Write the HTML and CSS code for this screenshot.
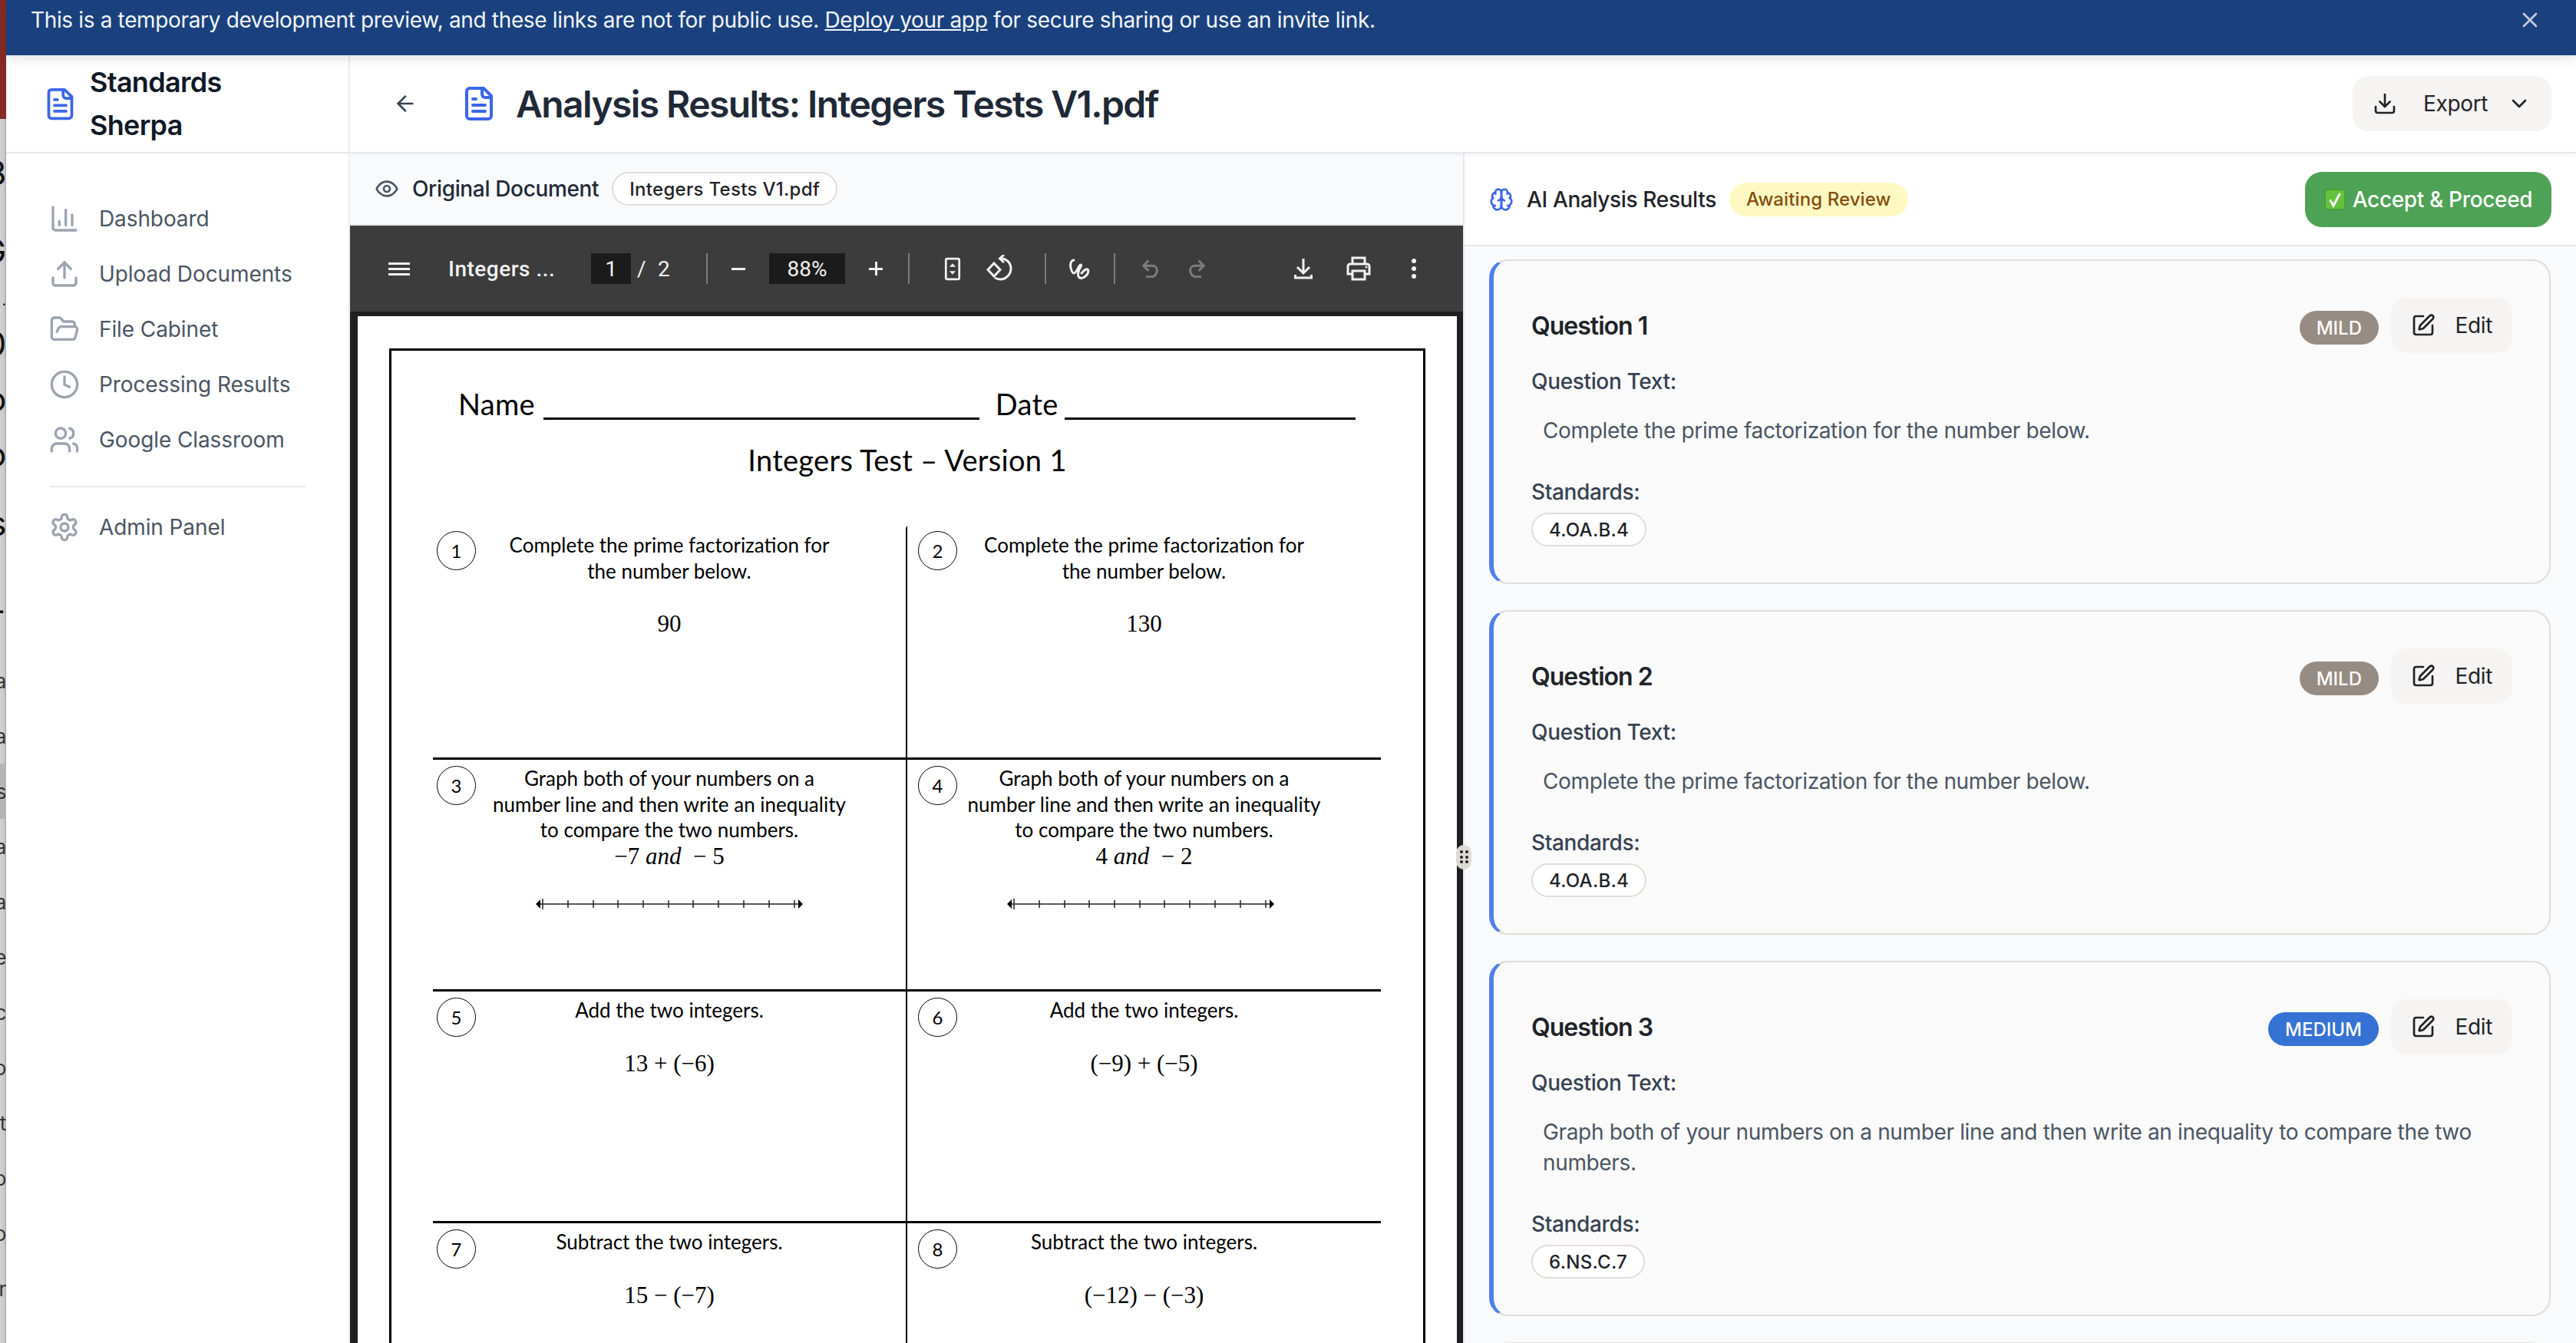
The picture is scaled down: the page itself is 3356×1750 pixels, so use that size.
FILE: index.html
```html
<!DOCTYPE html>
<html lang="en">

<head>
  <meta charset="UTF-8">
  <meta name="viewport" content="width=device-width, initial-scale=1.0">
  <title>Analysis Results</title>
  <link rel="stylesheet" href="styles.css">
</head>

<body>
  <!-- the window behind, only a sliver of it shows -->
  <div class="behind">
    <div class="behind-top"></div>
    <div class="behind-text">
      <p class="h116">8</p>
      <p class="h87">G</p>
      <p class="h42 tiny">.</p>
      <p class="h72">0</p>
      <p class="h72">o</p>
      <p class="h72">o</p>
      <p class="h108">s</p>
      <p class="h115">+</p>
      <p class="h72 small">a</p>
      <p class="h72 small">a</p>
      <p class="h72 small shade">s</p>
      <p class="h72 small">a</p>
      <p class="h72 small">a</p>
      <p class="h72 small">e</p>
      <p class="h72 small">c</p>
      <p class="h72 small">o</p>
      <p class="h72 small">t</p>
      <p class="h72 small">o</p>
      <p class="h72 small">o</p>
      <p class="h72 small">r</p>
    </div>
  </div>

  <div class="app">
    <div class="banner">
      <span>This is a temporary development preview, and these links are not for public use. <a href="#">Deploy your app</a> for secure sharing or use an invite link.</span>
      <svg class="ic ic-close" viewBox="0 0 24 24"><path d="M18 6 6 18" /><path d="m6 6 12 12" /></svg>
    </div>

    <div class="workspace">
      <aside class="sidebar">
        <div class="side-head">
          <svg class="ic ic-logo" viewBox="0 0 24 24"><path d="M15 2H6a2 2 0 0 0-2 2v16a2 2 0 0 0 2 2h12a2 2 0 0 0 2-2V7Z" /><path d="M14 2v4a2 2 0 0 0 2 2h4" /><path d="M10 9H8" /><path d="M16 13H8" /><path d="M16 17H8" /></svg>
          <div class="brand">Standards Sherpa</div>
        </div>
        <nav class="nav">
          <a class="nav-item" href="#">
            <svg class="ic" viewBox="0 0 24 24"><path d="M3 3v16a2 2 0 0 0 2 2h16" /><path d="M18 17V9" /><path d="M13 17V5" /><path d="M8 17v-3" /></svg>
            Dashboard
          </a>
          <a class="nav-item" href="#">
            <svg class="ic" viewBox="0 0 24 24"><path d="M21 15v4a2 2 0 0 1-2 2H5a2 2 0 0 1-2-2v-4" /><path d="M17 8 12 3 7 8" /><path d="M12 3v12" /></svg>
            Upload Documents
          </a>
          <a class="nav-item" href="#">
            <svg class="ic" viewBox="0 0 24 24"><path d="m6 14 1.5-2.9A2 2 0 0 1 9.24 10H20a2 2 0 0 1 1.94 2.5l-1.54 6a2 2 0 0 1-1.95 1.5H4a2 2 0 0 1-2-2V5a2 2 0 0 1 2-2h3.9a2 2 0 0 1 1.69.9l.81 1.2a2 2 0 0 0 1.67.9H18a2 2 0 0 1 2 2v2" /></svg>
            File Cabinet
          </a>
          <a class="nav-item" href="#">
            <svg class="ic" viewBox="0 0 24 24"><circle cx="12" cy="12" r="10" /><path d="M12 6v6l4 2" /></svg>
            Processing Results
          </a>
          <a class="nav-item" href="#">
            <svg class="ic" viewBox="0 0 24 24"><path d="M16 21v-2a4 4 0 0 0-4-4H6a4 4 0 0 0-4 4v2" /><circle cx="9" cy="7" r="4" /><path d="M22 21v-2a4 4 0 0 0-3-3.87" /><path d="M16 3.13a4 4 0 0 1 0 7.75" /></svg>
            Google Classroom
          </a>
          <div class="nav-line"></div>
          <a class="nav-item" href="#">
            <svg class="ic" viewBox="0 0 24 24"><path d="M12.22 2h-.44a2 2 0 0 0-2 2v.18a2 2 0 0 1-1 1.73l-.43.25a2 2 0 0 1-2 0l-.15-.08a2 2 0 0 0-2.73.73l-.22.38a2 2 0 0 0 .73 2.73l.15.1a2 2 0 0 1 1 1.72v.51a2 2 0 0 1-1 1.74l-.15.09a2 2 0 0 0-.73 2.73l.22.38a2 2 0 0 0 2.73.73l.15-.08a2 2 0 0 1 2 0l.43.25a2 2 0 0 1 1 1.73V20a2 2 0 0 0 2 2h.44a2 2 0 0 0 2-2v-.18a2 2 0 0 1 1-1.73l.43-.25a2 2 0 0 1 2 0l.15.08a2 2 0 0 0 2.73-.73l.22-.39a2 2 0 0 0-.73-2.73l-.15-.08a2 2 0 0 1-1-1.74v-.5a2 2 0 0 1 1-1.74l.15-.09a2 2 0 0 0 .73-2.73l-.22-.38a2 2 0 0 0-2.73-.73l-.15.08a2 2 0 0 1-2 0l-.43-.25a2 2 0 0 1-1-1.73V4a2 2 0 0 0-2-2z" /><circle cx="12" cy="12" r="3" /></svg>
            Admin Panel
          </a>
        </nav>
      </aside>

      <main class="main">
        <header class="main-head">
          <svg class="ic ic-back" viewBox="0 0 24 24"><path d="m12 19-7-7 7-7" /><path d="M19 12H5" /></svg>
          <svg class="ic ic-title" viewBox="0 0 24 24"><path d="M15 2H6a2 2 0 0 0-2 2v16a2 2 0 0 0 2 2h12a2 2 0 0 0 2-2V7Z" /><path d="M14 2v4a2 2 0 0 0 2 2h4" /><path d="M10 9H8" /><path d="M16 13H8" /><path d="M16 17H8" /></svg>
          <h1 class="title">Analysis Results: Integers Tests V1.pdf</h1>
          <button class="export">
            <svg class="ic ic-dark" viewBox="0 0 24 24"><path d="M21 15v4a2 2 0 0 1-2 2H5a2 2 0 0 1-2-2v-4" /><path d="m7 10 5 5 5-5" /><path d="M12 15V3" /></svg>
            <span class="export-label">Export</span>
            <svg class="ic ic-dark" viewBox="0 0 24 24"><path d="m6 9 6 6 6-6" /></svg>
          </button>
        </header>

        <div class="panels">
          <section class="left-panel">
            <div class="doc-bar">
              <svg class="ic ic-eye" viewBox="0 0 24 24"><path d="M2 12s3-7 10-7 10 7 10 7-3 7-10 7-10-7-10-7Z" /><circle cx="12" cy="12" r="3" /></svg>
              <span class="doc-label">Original Document</span>
              <span class="chip">Integers Tests V1.pdf</span>
            </div>

            <div class="pdf-bar">
              <div class="pdf-left">
                <svg class="tb-ic tb-menu" viewBox="0 0 28 24"><path d="M0 4h28v3H0zM0 11h28v3H0zM0 18h28v3H0z" /></svg>
                <span class="pdf-name">Integers ...</span>
              </div>
              <div class="pdf-mid">
                <span class="pdf-input page-num">1</span>
                <span class="pdf-slash">/</span>
                <span class="pdf-total">2</span>
                <span class="pdf-sep first"></span>
                <span class="pdf-minus"></span>
                <span class="pdf-input zoom-num">88%</span>
                <span class="pdf-plus"></span>
                <span class="pdf-sep"></span>
                <svg class="tb-ic tb-fit" viewBox="0 0 24 32"><rect x="2.500" y="1.500" width="19" height="29" rx="2" fill="none" stroke="currentColor" stroke-width="3" /><path d="M12 8l4.500 5h-9zM12 24l-4.500-5h9z" /></svg>
                <svg class="tb-ic tb-rotate" viewBox="0 0 36 36"><path d="M10 11 18 19.500 10 28 2 19.500Z" fill="none" stroke="currentColor" stroke-width="3" /><path d="M19 5c8 0 13 6 13 13s-6 14-14 14c-3 0-5-1-7-2" fill="none" stroke="currentColor" stroke-width="3" /><path d="M23 0 17.500 5l5.500 5" fill="none" stroke="currentColor" stroke-width="3" /></svg>
                <span class="pdf-sep"></span>
                <svg class="tb-ic tb-draw" viewBox="0 0 28 27"><path d="M6 2C2 2 1 8 2 12c1 4 2 7 4 7 4 0 6-11 9-11 3 0-6 9-3 15 2 4 7 3 11-2 3-4 2-8-1-7-3 1-5 4-6 5" fill="none" stroke="currentColor" stroke-width="3" stroke-linecap="round" /></svg>
                <span class="pdf-sep"></span>
                <svg class="tb-ic tb-undo" viewBox="0 0 28 32"><path d="M11 3 3 11l8 8M3 11h13c5 0 8 3 8 7s-3 10-8 10H7" fill="none" stroke="currentColor" stroke-width="3.500" /></svg>
                <svg class="tb-ic tb-redo" viewBox="0 0 28 32"><path d="M17 3l8 8-8 8M25 11H12c-5 0-8 3-8 7s3 10 8 10h9" fill="none" stroke="currentColor" stroke-width="3.500" /></svg>
              </div>
              <div class="pdf-right">
                <svg class="tb-ic tb-dl" viewBox="0 0 24 28"><path d="M12 1v18M4 12l8 8 8-8" fill="none" stroke="currentColor" stroke-width="3" /><path d="M1.500 22v4h21v-4" fill="none" stroke="currentColor" stroke-width="3" /></svg>
                <svg class="tb-ic tb-print" viewBox="0 0 32 32"><path d="M8 10V2h16v8M8 23H2V13a3 3 0 0 1 3-3h22a3 3 0 0 1 3 3v10h-6M8 19h16v11H8z" fill="none" stroke="currentColor" stroke-width="3" /><circle cx="26" cy="14" r="1.500" /></svg>
                <svg class="tb-ic tb-more" viewBox="0 0 8 28"><circle cx="4" cy="4" r="3" /><circle cx="4" cy="14" r="3" /><circle cx="4" cy="24" r="3" /></svg>
              </div>
            </div>

            <div class="viewer">
              <div class="page">
                <div class="sheet">
                  <div class="ws-head">
                    <span>Name</span><span class="blank blank-name"></span>
                    <span class="ws-date">Date</span><span class="blank blank-date"></span>
                  </div>
                  <div class="ws-title">Integers Test – Version 1</div>
                  <div class="ws-grid">
                    <div class="ws-cell top left">
                      <span class="num">1</span>
                      <p>Complete the prime factorization for<br>the number below.</p>
                      <p class="math">90</p>
                    </div>
                    <div class="ws-cell top">
                      <span class="num">2</span>
                      <p>Complete the prime factorization for<br>the number below.</p>
                      <p class="math">130</p>
                    </div>
                    <div class="ws-cell left">
                      <span class="num">3</span>
                      <p>Graph both of your numbers on a<br>number line and then write an inequality<br>to compare the two numbers.</p>
                      <p class="math tight">−7 <i>and</i> &nbsp;− 5</p>
                      <svg class="numline" viewBox="0 0 348 18"><path d="M2 9h344M9 2v14M42 4v10M75 4v10M107 4v10M140 4v10M173 4v10M205 4v10M238 4v10M271 4v10M304 4v10M337 4v10" /><path class="head" d="M0 9l6-6v12zM348 9l-6-6v12z" /></svg>
                    </div>
                    <div class="ws-cell">
                      <span class="num">4</span>
                      <p>Graph both of your numbers on a<br>number line and then write an inequality<br>to compare the two numbers.</p>
                      <p class="math tight">4 <i>and</i> &nbsp;− 2</p>
                      <svg class="numline" viewBox="0 0 348 18"><path d="M2 9h344M9 2v14M42 4v10M75 4v10M107 4v10M140 4v10M173 4v10M205 4v10M238 4v10M271 4v10M304 4v10M337 4v10" /><path class="head" d="M0 9l6-6v12zM348 9l-6-6v12z" /></svg>
                    </div>
                    <div class="ws-cell left">
                      <span class="num">5</span>
                      <p>Add the two integers.</p>
                      <p class="math">13 + (−6)</p>
                    </div>
                    <div class="ws-cell">
                      <span class="num">6</span>
                      <p>Add the two integers.</p>
                      <p class="math">(−9) + (−5)</p>
                    </div>
                    <div class="ws-cell left">
                      <span class="num">7</span>
                      <p>Subtract the two integers.</p>
                      <p class="math">15 − (−7)</p>
                    </div>
                    <div class="ws-cell">
                      <span class="num">8</span>
                      <p>Subtract the two integers.</p>
                      <p class="math">(−12) − (−3)</p>
                    </div>
                  </div>
                </div>
              </div>
            </div>
          </section>

          <div class="handle"><i></i><i></i><i></i><i></i><i></i><i></i></div>

          <section class="right-panel">
            <div class="ai-head">
              <svg class="ic ic-brain" viewBox="0 0 24 24"><path d="M12 5a3 3 0 1 0-5.997.125 4 4 0 0 0-2.526 5.77 4 4 0 0 0 .556 6.588A4 4 0 1 0 12 18Z" /><path d="M12 5a3 3 0 1 1 5.997.125 4 4 0 0 1 2.526 5.77 4 4 0 0 1-.556 6.588A4 4 0 1 1 12 18Z" /><path d="M15 13a4.500 4.500 0 0 1-3-4 4.500 4.500 0 0 1-3 4" /><path d="M17.599 6.500a3 3 0 0 0 .399-1.375" /><path d="M6.003 5.125A3 3 0 0 0 6.401 6.500" /><path d="M3.477 10.896a4 4 0 0 1 .585-.396" /><path d="M19.938 10.500a4 4 0 0 1 .585.396" /><path d="M6 18a4 4 0 0 1-1.967-.516" /><path d="M19.967 17.484A4 4 0 0 1 18 18" /></svg>
              <span class="ai-label">AI Analysis Results</span>
              <span class="await">Awaiting Review</span>
              <button class="accept">
                <svg class="check" viewBox="0 0 28 28"><rect x="1" y="1" width="26" height="26" rx="4" fill="#62c23c" stroke="#3f8f2c" /><path d="M7.500 14.500l4.500 7.500 8.500-16" fill="none" stroke="#fff" stroke-width="3" /></svg>
                Accept &amp; Proceed
              </button>
            </div>

            <div class="cards">
              <article class="card">
                <div class="card-head">
                  <h3>Question 1</h3>
                  <span class="level mild">MILD</span>
                  <button class="edit"><svg class="ic ic-dark" viewBox="0 0 24 24"><path d="M12 3H5a2 2 0 0 0-2 2v14a2 2 0 0 0 2 2h14a2 2 0 0 0 2-2v-7" /><path d="M18.375 2.625a1 1 0 0 1 3 3l-9.013 9.014a2 2 0 0 1-.853.505l-2.873.84a.5.5 0 0 1-.62-.62l.84-2.873a2 2 0 0 1 .506-.852z" /></svg>Edit</button>
                </div>
                <div class="field">Question Text:</div>
                <p class="q-text">Complete the prime factorization for the number below.</p>
                <div class="field std">Standards:</div>
                <span class="chip std-chip">4.OA.B.4</span>
              </article>

              <article class="card">
                <div class="card-head">
                  <h3>Question 2</h3>
                  <span class="level mild">MILD</span>
                  <button class="edit"><svg class="ic ic-dark" viewBox="0 0 24 24"><path d="M12 3H5a2 2 0 0 0-2 2v14a2 2 0 0 0 2 2h14a2 2 0 0 0 2-2v-7" /><path d="M18.375 2.625a1 1 0 0 1 3 3l-9.013 9.014a2 2 0 0 1-.853.505l-2.873.84a.5.5 0 0 1-.62-.62l.84-2.873a2 2 0 0 1 .506-.852z" /></svg>Edit</button>
                </div>
                <div class="field">Question Text:</div>
                <p class="q-text">Complete the prime factorization for the number below.</p>
                <div class="field std">Standards:</div>
                <span class="chip std-chip">4.OA.B.4</span>
              </article>

              <article class="card">
                <div class="card-head">
                  <h3>Question 3</h3>
                  <span class="level medium">MEDIUM</span>
                  <button class="edit"><svg class="ic ic-dark" viewBox="0 0 24 24"><path d="M12 3H5a2 2 0 0 0-2 2v14a2 2 0 0 0 2 2h14a2 2 0 0 0 2-2v-7" /><path d="M18.375 2.625a1 1 0 0 1 3 3l-9.013 9.014a2 2 0 0 1-.853.505l-2.873.84a.5.5 0 0 1-.62-.62l.84-2.873a2 2 0 0 1 .506-.852z" /></svg>Edit</button>
                </div>
                <div class="field">Question Text:</div>
                <p class="q-text">Graph both of your numbers on a number line and then write an inequality to compare the two numbers.</p>
                <div class="field std">Standards:</div>
                <span class="chip std-chip">6.NS.C.7</span>
              </article>

              <article class="card"></article>
            </div>
          </section>
        </div>
      </main>
    </div>
  </div>
</body>

</html>
```

FILE: styles.css
```css
* {
  box-sizing: border-box;
}

html,
body {
  margin: 0;
  height: 100%;
  overflow: hidden;
}

body {
  display: flex;
  font-family: Inter, "Liberation Sans", sans-serif;
  font-size: 28px;
  letter-spacing: -0.35px;
  color: #1f2937;
  background: #fff;
}

p,
h1,
h3 {
  margin: 0;
}

button {
  font: inherit;
  letter-spacing: inherit;
  border: 0;
  color: #1f2328;
}

/* icons */
.ic {
  flex: none;
  width: 40px;
  height: 40px;
  fill: none;
  stroke: #9ca3af;
  stroke-width: 2;
  stroke-linecap: round;
  stroke-linejoin: round;
}

.ic-dark {
  width: 32px;
  height: 32px;
  stroke: #1f2328;
}

.ic-logo,
.ic-title {
  stroke: #3b66e8;
}

.ic-logo {
  width: 45px;
  height: 45px;
}

.ic-title {
  width: 48px;
  height: 48px;
}

.ic-back {
  width: 32px;
  height: 32px;
  stroke: #374151;
}

.ic-eye {
  width: 32px;
  height: 32px;
  stroke: #4b5563;
}

.ic-brain {
  width: 32px;
  height: 32px;
  stroke: #3b66e8;
}

.ic-close {
  width: 32px;
  height: 32px;
  stroke: #c3cce0;
}

/* window behind */
.behind {
  flex: none;
  width: 8px;
  height: 100%;
  overflow: hidden;
  background: linear-gradient(to right, #d2d2d2, #c9c9c9 70%, #a5a5a5);
}

.behind-top {
  height: 155px;
  background: #862a24;
}

.behind-text {
  padding-top: 12px;
  font-size: 44px;
  color: #111;
}

.behind-text p {
  display: flex;
  justify-content: flex-end;
  align-items: center;
}

.behind-text .small {
  font-size: 26px;
  color: #333;
}

.behind-text .tiny {
  font-size: 20px;
}

.behind-text .shade {
  background: #b5b5b5;
}

.h42 { height: 42px; }
.h72 { height: 72px; }
.h87 { height: 87px; }
.h108 { height: 108px; }
.h115 { height: 115px; }
.h116 { height: 116px; }

/* app */
.app {
  flex: 1;
  min-width: 0;
  display: flex;
  flex-direction: column;
}

.banner {
  flex: none;
  height: 72px;
  padding: 0 44px 20px 32px;
  display: flex;
  align-items: center;
  justify-content: space-between;
  background: #1a417e;
  color: #f3f5fa;
  position: relative;
  z-index: 2;
  box-shadow: 0 4px 14px rgba(0, 0, 0, .12);
}

.banner a {
  color: inherit;
}

.workspace {
  flex: 1;
  min-height: 0;
  display: flex;
}

/* sidebar */
.sidebar {
  flex: none;
  width: 448px;
  border-right: 2px solid #eceef1;
}

.side-head {
  height: 128px;
  padding-left: 48px;
  display: flex;
  align-items: center;
  gap: 16px;
  border-bottom: 2px solid #e5e7eb;
}

.brand {
  width: 200px;
  font-size: 36px;
  font-weight: 600;
  line-height: 56px;
  letter-spacing: -0.7px;
  color: #111827;
}

.nav {
  padding: 49px 55px 0 56px;
}

.nav-item {
  height: 72px;
  display: flex;
  align-items: center;
  gap: 25px;
  color: #4b5563;
  text-decoration: none;
  letter-spacing: -0.1px;
}

.nav-line {
  height: 2px;
  margin: 24px 0 16px;
  background: #e5e7eb;
}

/* main */
.main {
  flex: 1;
  min-width: 0;
  display: flex;
  flex-direction: column;
}

.main-head {
  flex: none;
  height: 128px;
  padding: 0 32px 0 56px;
  display: flex;
  align-items: center;
  border-bottom: 2px solid #e5e7eb;
  box-shadow: 0 2px 4px rgba(0, 0, 0, .04);
  position: relative;
  z-index: 1;
}

.ic-back {
  margin-right: 56px;
}

.title {
  flex: 1;
  margin-left: 24px;
  font-size: 48px;
  font-weight: 600;
  letter-spacing: -1.6px;
  color: #1f2937;
}

.export {
  width: 259px;
  height: 72px;
  padding: 0 26px;
  display: flex;
  align-items: center;
  border-radius: 20px;
  background: #f5f4f2;
}

.export-label {
  margin: 0 25px 0 34px;
}

.panels {
  flex: 1;
  min-height: 0;
  display: flex;
  position: relative;
}

.left-panel {
  flex: none;
  width: 1450px;
  display: flex;
  flex-direction: column;
}

.doc-bar {
  flex: none;
  height: 94px;
  padding-left: 32px;
  display: flex;
  align-items: center;
  gap: 17px;
  background: #f8fafc;
  border-bottom: 2px solid #e5e7eb;
}

.doc-label {
  font-weight: 500;
  color: #1f2937;
}

.chip {
  height: 44px;
  padding: 0 21px;
  display: inline-flex;
  align-items: center;
  border: 2px solid #e0ddd8;
  border-radius: 22px;
  background: #fff;
  font-size: 24px;
  font-weight: 500;
  letter-spacing: 0.3px;
  color: #1f2328;
}

/* pdf toolbar */
.pdf-bar {
  flex: none;
  height: 112px;
  padding: 0 32px;
  display: flex;
  align-items: center;
  background: #3c3c3c;
  color: #f1f1f1;
  font-family: Roboto, sans-serif;
  letter-spacing: 0;
}

.tb-ic {
  flex: none;
  fill: currentColor;
}

.pdf-left {
  width: 282px;
  display: flex;
  align-items: center;
}

.tb-menu {
  width: 28px;
  height: 24px;
  margin: 0 50px 0 18px;
}

.pdf-name {
  font-size: 28px;
  font-weight: 500;
  letter-spacing: 0.5px;
}

.pdf-mid {
  flex: 1;
  display: flex;
  align-items: center;
}

.pdf-input {
  height: 40px;
  display: flex;
  align-items: center;
  justify-content: center;
  background: #1b1b1b;
  font-size: 28px;
}

.page-num {
  width: 52px;
}

.zoom-num {
  width: 99px;
}

.pdf-slash {
  margin-left: 8px;
  width: 12px;
}

.pdf-total {
  margin-left: 15px;
  width: 20px;
}

.pdf-sep {
  flex: none;
  width: 2px;
  height: 40px;
  margin: 0 20px;
  background: #7c7c7c;
}

.pdf-sep.first {
  margin-left: 43px;
  margin-right: 31px;
}

.pdf-minus,
.pdf-plus {
  flex: none;
  width: 18px;
  height: 3px;
  background: currentColor;
}

.pdf-minus {
  margin-right: 31px;
}

.pdf-plus {
  margin: 0 13px 0 31px;
  position: relative;
}

.pdf-plus::after {
  content: "";
  position: absolute;
  left: 7.500px;
  top: -7.500px;
  width: 3px;
  height: 18px;
  background: currentColor;
}

.tb-fit {
  width: 22px;
  height: 31px;
  margin-left: 25px;
}

.tb-rotate {
  width: 36px;
  height: 36px;
  margin: 0 20px 0 33px;
}

.tb-draw {
  width: 28px;
  height: 27px;
  margin: 0 10px;
}

.tb-undo,
.tb-redo {
  width: 24px;
  height: 27px;
  color: #7d7d7d;
}

.tb-undo {
  margin-left: 14px;
}

.tb-redo {
  margin-left: 36px;
}

.pdf-right {
  display: flex;
  align-items: center;
}

.tb-dl {
  width: 24px;
  height: 28px;
  margin-right: 44px;
}

.tb-print {
  width: 32px;
  height: 32px;
  margin-right: 52px;
}

.tb-more {
  width: 8px;
  height: 28px;
  margin-right: 28px;
}

/* pdf page */
.viewer {
  flex: 1;
  min-height: 0;
  padding: 6px 8px 0 10px;
  background: #1f1f1f;
  overflow: hidden;
}

.page {
  height: 100%;
  padding: 42px 41px 0 41px;
  background: #fff;
  overflow: hidden;
  font-family: Lato, sans-serif;
  letter-spacing: 0;
  color: #000;
}

.sheet {
  height: 1500px;
  border: 3px solid #000;
}

.ws-head {
  margin: 46px 0 0 87px;
  display: flex;
  align-items: center;
  height: 46px;
  font-size: 38px;
  letter-spacing: 0.3px;
}

.blank {
  align-self: flex-end;
  height: 3px;
  background: #000;
  margin-bottom: 2px;
}

.blank-name {
  width: 568px;
  margin-left: 11px;
}

.ws-date {
  margin-left: 21px;
}

.blank-date {
  width: 379px;
  margin-left: 8px;
}

.ws-title {
  margin-top: 25px;
  height: 50px;
  line-height: 50px;
  text-align: center;
  font-size: 38px;
  letter-spacing: 0.3px;
}

.ws-grid {
  margin: 61px 0 0 54px;
  width: 1235px;
  display: grid;
  grid-template-columns: 618px 617px;
  grid-auto-rows: 302px;
}

.ws-cell {
  position: relative;
  padding-top: 8px;
  border-top: 3px solid #000;
  text-align: center;
  font-size: 26px;
  line-height: 33.500px;
}

.ws-cell.top {
  padding-top: 6px;
  border-top-color: transparent;
}

.ws-cell.left {
  border-right: 2px solid #000;
}

.num {
  position: absolute;
  top: 8px;
  left: 14px;
  width: 51px;
  height: 51px;
  display: flex;
  align-items: center;
  justify-content: center;
  border: 1.500px solid #000;
  border-radius: 50%;
  font-size: 24px;
}

.ws-cell.left .num {
  left: 5px;
}

.ws-cell.top .num {
  top: 4px;
}

.math {
  margin-top: 35px;
  font-family: "Liberation Serif", serif;
  font-size: 31px;
}

.math.tight {
  margin-top: 0;
}

.numline {
  display: block;
  width: 348px;
  height: 18px;
  margin: 37px auto 0;
  fill: none;
  stroke: #222;
  stroke-width: 1.500;
}

.ws-cell:not(.left) .numline {
  margin-left: 130px;
}

.numline .head {
  fill: #000;
  stroke: none;
}

/* resize handle */
.handle {
  position: absolute;
  left: 1441px;
  top: 901px;
  width: 20px;
  height: 32px;
  padding: 7px 4px;
  display: grid;
  grid-template-columns: 4px 4px;
  justify-content: center;
  gap: 2px 3px;
  background: #dedbd6;
  border-radius: 10px;
  z-index: 1;
}

.handle i {
  width: 4px;
  height: 4px;
  border-radius: 50%;
  background: #222;
}

/* analysis side */
.right-panel {
  flex: 1;
  min-width: 0;
  display: flex;
  flex-direction: column;
  border-left: 2px solid #e5e7eb;
}

.ai-head {
  flex: none;
  height: 121px;
  padding: 0 32px;
  display: flex;
  align-items: center;
  gap: 17px;
  border-bottom: 2px solid #e5e7eb;
}

.ai-label {
  font-weight: 500;
  color: #1f2328;
}

.await {
  height: 44px;
  padding: 0 22px;
  display: flex;
  align-items: center;
  border-radius: 22px;
  background: #fef9c3;
  color: #854d0e;
  font-size: 24px;
  font-weight: 500;
  letter-spacing: 0.1px;
}

.accept {
  width: 321px;
  height: 72px;
  margin-left: auto;
  display: flex;
  align-items: center;
  justify-content: center;
  gap: 9px;
  border-radius: 22px;
  background: #4ea256;
  color: #fff;
  font-weight: 500;
}

.check {
  width: 28px;
  height: 28px;
}

.cards {
  flex: 1;
  min-height: 0;
  padding: 17px 33px 0 32px;
  display: flex;
  flex-direction: column;
  gap: 34px;
  background: #f8fafc;
  overflow: hidden;
}

.card {
  flex: none;
  padding: 48px 48px 47px 49px;
  display: flex;
  flex-direction: column;
  align-items: flex-start;
  border: 2px solid #e0ddd8;
  border-left: 6px solid #4f80e8;
  border-radius: 24px;
  background: #fafafa;
}

.card-head {
  width: 100%;
  display: flex;
  align-items: center;
  gap: 16px;
}

.card-head h3 {
  flex: 1;
  font-size: 32px;
  font-weight: 600;
  letter-spacing: -1px;
  color: #1f2328;
}

.level {
  height: 44px;
  margin-top: 6px;
  padding: 0 22px;
  display: flex;
  align-items: center;
  border-radius: 22px;
  font-size: 24px;
  font-weight: 500;
  letter-spacing: 0;
  color: #fdfcfb;
}

.mild {
  background: #968c84;
}

.medium {
  background: #3572d4;
}

.edit {
  width: 158px;
  height: 72px;
  padding: 0 26px;
  display: flex;
  align-items: center;
  justify-content: space-between;
  border-radius: 20px;
  background: #f5f4f2;
}

.field {
  margin-top: 17px;
  line-height: 40px;
  font-weight: 500;
  color: #374151;
}

.field.std {
  margin-top: 40px;
}

.q-text {
  margin: 24px 0 0 15px;
  line-height: 40px;
  color: #4b5563;
}

.std-chip {
  margin-top: 7px;
}
```
